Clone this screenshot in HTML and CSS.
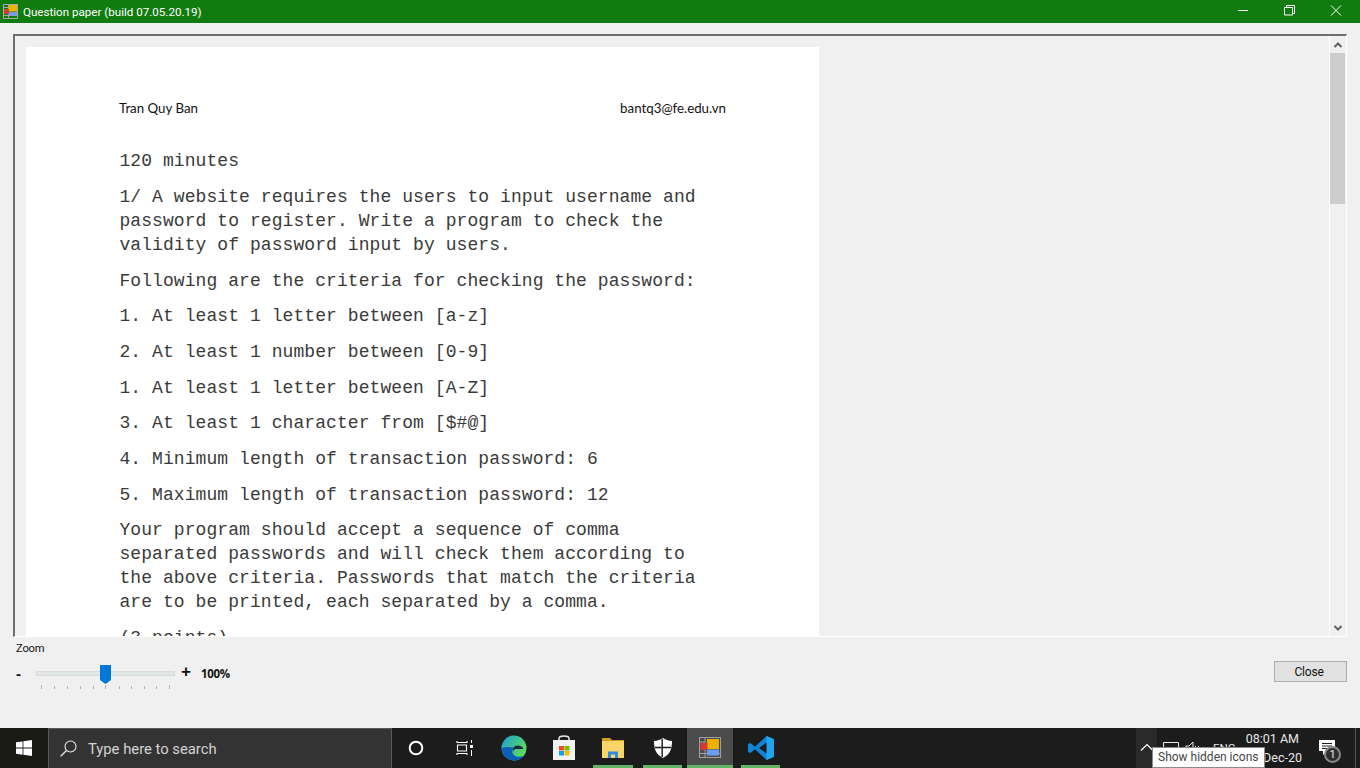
FILE: index.html
```html
<!DOCTYPE html>
<html lang="en">
<head>
<meta charset="utf-8">
<title>Question paper</title>
<link rel="stylesheet" href="styles.css">
</head>
<body>
<div class="screen">
  <header class="titlebar">
    <svg class="app-icon" width="16" height="16" viewBox="0 0 16 16"><rect x=".5" y=".5" width="14" height="14" fill="none" stroke="#a8a8a8"/><path d="M5.500 1v14M1 3.500h4M1 11.500h13" stroke="#a8a8a8"/><rect x="6" y="1" width="8" height="6.500" fill="#f0b400"/><rect x="6" y="8" width="8" height="3.500" fill="#6d9bf0"/><rect x="1" y="5" width="5" height="5" fill="#d83a34"/></svg>
    <span class="title">Question paper (build 07.05.20.19)</span>
    <div class="win-buttons">
      <svg width="46" height="23" viewBox="0 0 46 23"><path d="M17 10.500h10" stroke="#fff"/></svg>
      <svg width="46" height="23" viewBox="0 0 46 23"><path d="M19.500 7.500v-2h8v8h-2M17.500 7.500h8v7.500h-8z" fill="none" stroke="#fff"/></svg>
      <svg width="46" height="23" viewBox="0 0 46 23"><path d="M18 5.500l10 10M28 5.500l-10 10" stroke="#fff"/></svg>
    </div>
  </header>

  <main class="window">
    <section class="viewer">
      <div class="viewport">
        <article class="page">
          <div class="page-head"><span>Tran Quy Ban</span><span>bantq3@fe.edu.vn</span></div>
          <div class="paper">
            <p>120 minutes</p>
            <p>1/ A website requires the users to input username and password to register. Write a program to check the validity of password input by users.</p>
            <p>Following are the criteria for checking the password:</p>
            <p>1. At least 1 letter between [a-z]</p>
            <p>2. At least 1 number between [0-9]</p>
            <p>1. At least 1 letter between [A-Z]</p>
            <p>3. At least 1 character from [$#@]</p>
            <p>4. Minimum length of transaction password: 6</p>
            <p>5. Maximum length of transaction password: 12</p>
            <p>Your program should accept a sequence of comma separated passwords and will check them according to the above criteria. Passwords that match the criteria are to be printed, each separated by a comma.</p>
            <p>(3 points)</p>
          </div>
        </article>
      </div>
      <div class="scrollbar">
        <svg class="arrow" width="16" height="16" viewBox="0 0 16 16"><path d="M4.500 10l3.500-3.500 3.500 3.500" fill="none" stroke="#606060" stroke-width="2"/></svg>
        <div class="thumb"></div>
        <svg class="arrow arrow-down" width="16" height="16" viewBox="0 0 16 16"><path d="M4.500 6l3.500 3.500 3.500-3.500" fill="none" stroke="#606060" stroke-width="2"/></svg>
      </div>
    </section>

    <section class="controls">
      <div class="zoom">
        <div class="zoom-label">Zoom</div>
        <div class="zoom-row">
          <span class="minus">-</span>
          <svg class="slider" width="140" height="28" viewBox="0 0 140 28">
            <rect x=".5" y="6.500" width="138" height="4" fill="#e3e6e6" stroke="#d8dcdc"/>
            <g stroke="#b4b4b4"><path d="M5.500 20v4M18.500 21v3M31.500 21v3M44.500 21v3M57.500 21v3M69.500 20v4M83.500 21v3M95.500 21v3M108.500 21v3M120.500 21v3M133.500 20v4"/></g>
            <path d="M64 0h11v15l-5.500 4-5.500-4z" fill="#0078d7"/>
          </svg>
          <span class="plus">+</span>
          <span class="percent">100%</span>
        </div>
      </div>
      <button class="close-btn" type="button">Close</button>
    </section>
  </main>

  <footer class="taskbar">
    <div class="start">
      <svg width="16" height="16" viewBox="0 0 16 16"><path d="M0 2.300l6.600-.9v6.200H0zM7.400 1.300L16 0v7.600H7.400zM0 8.400h6.600v6.300L0 13.800zM7.400 8.400H16V16l-8.600-1.200z" fill="#fff"/></svg>
    </div>
    <div class="search">
      <svg width="17" height="17" viewBox="0 0 17 17"><circle cx="10.500" cy="6.500" r="5.500" fill="none" stroke="#e8e8e8" stroke-width="1.100"/><path d="M6.500 10.500L.7 16.300" stroke="#e8e8e8" stroke-width="1.300"/></svg>
      <span>Type here to search</span>
    </div>
    <div class="tasks">
      <div class="task">
        <svg width="16" height="16" viewBox="0 0 16 16"><circle cx="8" cy="8" r="6.300" fill="none" stroke="#fff" stroke-width="2"/></svg>
      </div>
      <div class="task">
        <svg width="18" height="16" viewBox="0 0 18 16"><path d="M1 1v1.500h10V1M1 15v-1.500h10V15M1.500 5h9v6h-9z" fill="none" stroke="#fff" stroke-width="1.100"/><rect x="14" y="5" width="3" height="3" fill="#fff"/><path d="M15.500 0v3M15.500 10v6" stroke="#fff"/></svg>
      </div>
      <div class="task">
        <svg width="26" height="26" viewBox="0 0 26 26"><defs><linearGradient id="eg" x1="0" y1="0" x2="1" y2=".6"><stop offset="0" stop-color="#1a9fd8"/><stop offset="1" stop-color="#5fdc5a"/></linearGradient></defs><circle cx="13" cy="13" r="12.500" fill="url(#eg)"/><path d="M.5 13C1 21 8 26 14 25.500c4-.3 7-2 9-4.500-4 1.500-9 1-11-2-1.500-2.500-1-5 1-6.500-5-1-9-.5-12.500.5z" fill="#0a5fb4"/><path d="M12 17c-1-3 1-6.500 4.500-6.500 3 0 5.500 1.500 6 3.500h-8c-1.200 0-2.200 1.500-2.500 3z" fill="#1c2c3c"/></svg>
      </div>
      <div class="task">
        <svg width="24" height="26" viewBox="0 0 24 26"><path d="M7 7V3.500C7 2 8.500 1 12 1s5 1 5 2.500V7" fill="none" stroke="#e8e8e8" stroke-width="1.500"/><rect x="1" y="5" width="22" height="20" fill="#f2f2f2"/><rect x="7" y="11" width="5" height="4.500" fill="#f25022"/><rect x="12.500" y="11" width="5" height="4.500" fill="#7fba00"/><rect x="7" y="16" width="5" height="4.500" fill="#00a4ef"/><rect x="12.500" y="16" width="5" height="4.500" fill="#ffb900"/></svg>
      </div>
      <div class="task running">
        <svg width="24" height="22" viewBox="0 0 24 22"><path d="M1 1h8l2 2h12v4H1z" fill="#d99a1e"/><rect x="1" y="4" width="22" height="17" fill="#fbd56a"/><path d="M7 21v-6.500h10V21h-3v-3.500h-4V21z" fill="#2d8fdc"/></svg>
      </div>
      <div class="task running">
        <svg width="18" height="20" viewBox="0 0 18 20"><path d="M9 0c2.500 1.800 5.500 2.800 9 3 0 8-2 13.500-9 17C2 16.500 0 11 0 3c3.500-.2 6.500-1.200 9-3z" fill="#fff"/><path d="M8.200 1v18M1 9.500h16" stroke="#1c1c1c" stroke-width="1.400"/></svg>
      </div>
      <div class="task running active">
        <svg width="22" height="21" viewBox="0 0 22 21"><rect x=".5" y=".5" width="21" height="20" fill="none" stroke="#a0a0a0"/><path d="M6 1v20M1 5h5M0 16.500h21" stroke="#a0a0a0"/><rect x="8" y="2" width="12" height="10" fill="#efb000"/><rect x="8" y="12.500" width="12" height="6" fill="#6c9df2"/><rect x="1.500" y="6" width="7" height="7" fill="#d8373a"/></svg>
      </div>
      <div class="task running">
        <svg width="26" height="26" viewBox="0 0 26 26"><path d="M18.500 1L26 4.300v17.400L18.500 25 7 14.300 2.500 18 0 16.700V9.300L2.500 8 7 11.700z" fill="#0f86d4"/><path d="M18.500 1L26 4.300v17.400L18.500 25z" fill="#22a5ee"/><path d="M18.500 7.500L11 13l7.500 5.500z" fill="#1c1c1c"/></svg>
      </div>
    </div>
    <div class="tray">
      <div class="chevron">
        <svg width="14" height="8" viewBox="0 0 14 8"><path d="M1 7.500l6-6 6 6" fill="none" stroke="#fff" stroke-width="1.200"/></svg>
      </div>
      <div class="tray-icons">
        <svg width="16" height="14" viewBox="0 0 16 14"><path d="M.5 1.500h15v10H.5zM4 7h8" fill="none" stroke="#e8e8e8"/></svg>
        <svg width="16" height="14" viewBox="0 0 16 14"><path d="M1 5h3l4-4v12L4 9H1zM10 5l4 4M14 5l-4 4" fill="none" stroke="#e8e8e8"/></svg>
        <span class="lang">ENG</span>
      </div>
      <div class="clock"><span class="clock-time">08:01 AM</span><span>Dec-20</span></div>
      <div class="notify">
        <svg width="16" height="15" viewBox="0 0 16 15"><path d="M0 0h16v11H8l-4 4v-4H0z" fill="#fff"/><path d="M3 3.500h10M3 6h10M3 8.500h6" stroke="#1c1c1c"/></svg>
        <span class="badge">1</span>
      </div>
      <div class="show-desktop"></div>
    </div>
    <div class="tooltip">Show hidden icons</div>
  </footer>
</div>
</body>
</html>
```

FILE: styles.css
```css
* { box-sizing: border-box; }
html, body { margin: 0; padding: 0; }
body { width: 1360px; height: 768px; overflow: hidden; font-family: Roboto, "Liberation Sans", sans-serif; }

.screen { display: flex; flex-direction: column; width: 1360px; height: 768px; background: #f0f0f0; }

.titlebar { display: flex; align-items: center; height: 23px; flex: none; background: #107c10; color: #fff; font-size: 11.600px; padding-left: 3px; }
.app-icon { flex: none; margin-right: 4px; }
.title { flex: 1; white-space: nowrap; }
.win-buttons { display: flex; flex: none; margin-right: 1px; }
.win-buttons svg { display: block; }

.window { flex: 1; min-height: 0; display: flex; flex-direction: column; padding: 11px 13px 0 13px; }

.viewer { display: flex; height: 603px; flex: none; border-top: 2px solid #6e6e6e; border-left: 2px solid #6e6e6e; border-right: 1px solid #fff; border-bottom: 1px solid #fff; }
.viewport { flex: 1; min-width: 0; padding: 11px 0 0 11px; overflow: hidden; }
.page { width: 793px; height: 800px; background: #fff; padding: 48px 93px 0 93.500px; }
.page-head { display: flex; justify-content: space-between; align-items: center; height: 26px; margin-left: -.5px; font-family: Lato, "Liberation Sans", sans-serif; font-size: 13.300px; color: #111; }
.paper { width: 596px; margin-top: 28.300px; font-family: "Liberation Mono", monospace; font-size: 18px; letter-spacing: .07px; line-height: 24px; color: #3a3a3a; }
.paper p { margin: 0 0 11.680px; }

.scrollbar { flex: none; width: 17px; display: flex; flex-direction: column; background: #f0f0f0; border-left: 1px solid #fff; }
.arrow { flex: none; display: block; width: 16px; margin-top: 1px; }
.thumb { height: 151px; width: 15px; background: #cdcdcd; }
.arrow-down { margin-top: auto; }

.controls { display: flex; justify-content: space-between; align-items: flex-start; flex: 1; padding-left: 3px; }
.zoom { display: flex; flex-direction: column; }
.zoom-label { font-size: 11.200px; line-height: 14px; margin-top: 5px; color: #111; letter-spacing: -.2px; }
.zoom-row { display: flex; align-items: flex-start; margin-top: 9px; }
.minus { width: 20px; font: bold 15px/18px "Liberation Sans", sans-serif; color: #111; }
.slider { flex: none; display: block; }
.plus { width: 20px; margin-left: 5px; margin-top: -1px; font: bold 17px/16px "Liberation Sans", sans-serif; color: #111; }
.percent { font: bold 11.500px/18px "Open Sans", sans-serif; color: #111; letter-spacing: -.3px; }
.close-btn { width: 73px; height: 21px; margin: 24px 0 0 0; padding: 0 3px 0 0; background: #e1e1e1; border: 1px solid #adadad; font-family: Roboto, sans-serif; font-size: 12px; letter-spacing: -.2px; color: #111; }

.taskbar { position: relative; display: flex; flex: none; height: 40px; background: #1c1c1c; color: #fff; }
.start { flex: none; width: 48px; display: flex; align-items: center; justify-content: center; background: #1b1b16; }
.search { flex: none; width: 344px; display: flex; align-items: center; gap: 11px; padding-left: 11px; background: #333; border: 1px solid #5a5a5a; border-bottom: none; font-size: 14.800px; color: #d4d4d4; }
.tasks { display: grid; grid-template-columns: 48px 49px 50px 49px 50px 49px 49px 49px; flex: none; }
.task { position: relative; display: flex; align-items: center; justify-content: center; padding-bottom: 1px; }
.task.running::after { content: ""; position: absolute; left: 5px; right: 5px; bottom: 0; height: 3px; background: #62b565; }
.task.active { background: #4c4c4c; margin-right: 3px; }
.task.active::after { left: 0; right: 0; }
.tray { flex: 1; display: flex; align-items: stretch; min-width: 0; padding-left: 351px; }
.chevron { flex: none; width: 21px; display: flex; align-items: center; justify-content: center; padding-bottom: 2px; background: #2a2a2a; }
.tray-icons { display: flex; align-items: center; gap: 6px; flex: none; width: 94px; padding-left: 6px; padding-bottom: 1px; font-size: 11.500px; color: #e8e8e8; }
.lang { margin-left: 6px; }
.clock { flex: none; width: 62px; margin-left: -7px; padding-right: 4px; display: flex; flex-direction: column; align-items: flex-end; justify-content: center; font-size: 12.500px; line-height: 19px; padding-bottom: 1px; color: #e8e8e8; }
.clock-time { margin-right: 3px; }
.notify { position: relative; flex: none; width: 33px; margin-left: 13px; display: flex; padding: 12px 0 0 0; }
.badge { position: absolute; left: 5px; top: 18px; width: 17px; height: 17px; border-radius: 50%; background: #2e2e2e; border: 2px solid #8a8a8a; text-align: center; font-size: 11px; line-height: 13px; color: #e8e8e8; }
.show-desktop { flex: none; width: 5px; margin-left: auto; border-left: 1px solid #555; }
.tooltip { position: absolute; left: 1152px; top: 19px; width: 113px; height: 21px; background: #fff; border: 1px solid #8a8a8a; padding-left: 5px; font-size: 12px; line-height: 18px; color: #444; white-space: nowrap; }
```
